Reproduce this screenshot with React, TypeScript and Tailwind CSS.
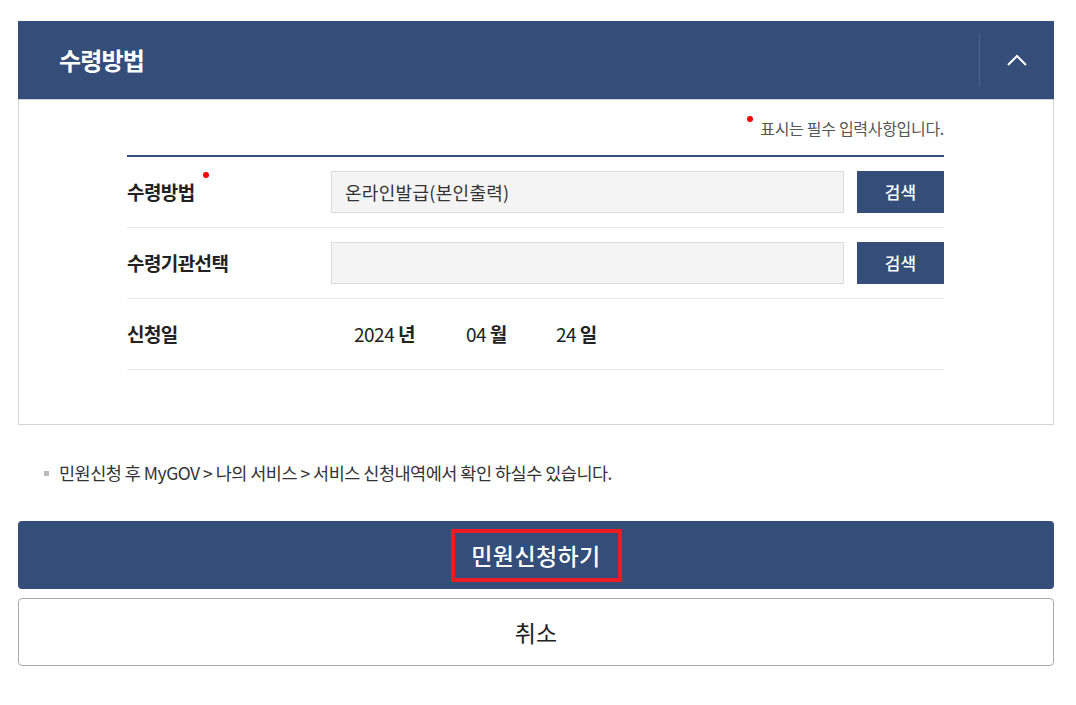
import React from 'react';

const font = { fontFamily: '"Noto Sans CJK KR", "Noto Sans", sans-serif' };

function SearchButton() {
  return (
    <button className="w-[87px] h-[42px] bg-[#344d79] text-white text-[17px] font-medium shrink-0">
      검색
    </button>
  );
}

export default function App() {
  return (
    <div className="bg-white min-h-[705px] pl-[18px] pr-[22px] pt-[21px]" style={font}>
      {/* section header */}
      <div className="h-[79px] bg-[#344d79] flex items-center justify-between border-b border-[#cfd4dc]">
        <h2 className="pl-[41px] text-white text-[24px] font-bold tracking-[-0.8px]">수령방법</h2>
        <div className="h-[54px] w-[75px] border-l border-[#4a6190] flex items-center justify-center">
          <svg width="22" height="14" viewBox="0 0 22 14" fill="none">
            <path d="M2 12 L11 3 L20 12" stroke="white" strokeWidth="2" />
          </svg>
        </div>
      </div>

      {/* section body */}
      <div className="h-[325px] border-x border-b border-[#d5d5d5] pl-[108px] pr-[109px] pt-[16px]">
        <div className="flex justify-end items-start h-[39px]">
          <span className="w-[6px] h-[6px] rounded-full bg-[#ff0000] mr-[7px] mt-[0px]" />
          <span className="text-[16px] text-[#555] tracking-[-0.3px]">표시는 필수 입력사항입니다.</span>
        </div>

        <div className="border-t-2 border-[#344d79]">
          <div className="h-[71px] flex items-center border-b border-[#e8e8e8]">
            <div className="w-[204px] text-[19px] font-bold text-[#222] tracking-[-0.6px] relative">
              수령방법
              <span className="absolute left-[76px] top-[-6px] w-[6px] h-[6px] rounded-full bg-[#ff0000]" />
            </div>
            <div className="flex-1 h-[42px] bg-[#f4f4f4] border border-[#dcdcdc] flex items-center pl-[13px] text-[18px] text-[#333] tracking-[0.3px]">
              온라인발급(본인출력)
            </div>
            <div className="w-[13px]" />
            <SearchButton />
          </div>

          <div className="h-[71px] flex items-center border-b border-[#e8e8e8]">
            <div className="w-[204px] text-[19px] font-bold text-[#222] tracking-[-0.6px]">수령기관선택</div>
            <div className="flex-1 h-[42px] bg-[#f4f4f4] border border-[#dcdcdc]" />
            <div className="w-[13px]" />
            <SearchButton />
          </div>

          <div className="h-[71px] flex items-center border-b border-[#e8e8e8]">
            <div className="w-[227px] text-[19px] font-bold text-[#222] tracking-[-0.6px]">신청일</div>
            <div className="flex items-center text-[19px] text-[#222]">
              <span className="w-[112px] tracking-[-0.5px]">2024 <span className="font-bold">년</span></span>
              <span className="w-[90px] tracking-[-0.5px]">04 <span className="font-bold">월</span></span>
              <span className="tracking-[-0.5px]">24 <span className="font-bold">일</span></span>
            </div>
          </div>
        </div>
      </div>

      {/* notice */}
      <div className="h-[96px] flex items-center pl-[26px]">
        <span className="w-[5px] h-[5px] bg-[#bbb] mr-[10px]" />
        <span className="text-[17.5px] text-[#333] tracking-[-0.5px]">
          민원신청 후 MyGOV &gt; 나의 서비스 &gt; 서비스 신청내역에서 확인 하실수 있습니다.
        </span>
      </div>

      {/* actions */}
      <div className="flex flex-col gap-[9px]">
        <button className="h-[68px] bg-[#344d79] rounded-[4px] flex items-center justify-center">
          <span className="w-[171px] h-[53px] border-[4px] border-[#ec1c24] flex items-center justify-center text-white text-[23px] font-medium tracking-[0.4px]">
            민원신청하기
          </span>
        </button>
        <button className="h-[68px] bg-white border border-[#aaa] rounded-[4px] text-[23px] text-[#222] font-normal">
          취소
        </button>
      </div>
    </div>
  );
}
